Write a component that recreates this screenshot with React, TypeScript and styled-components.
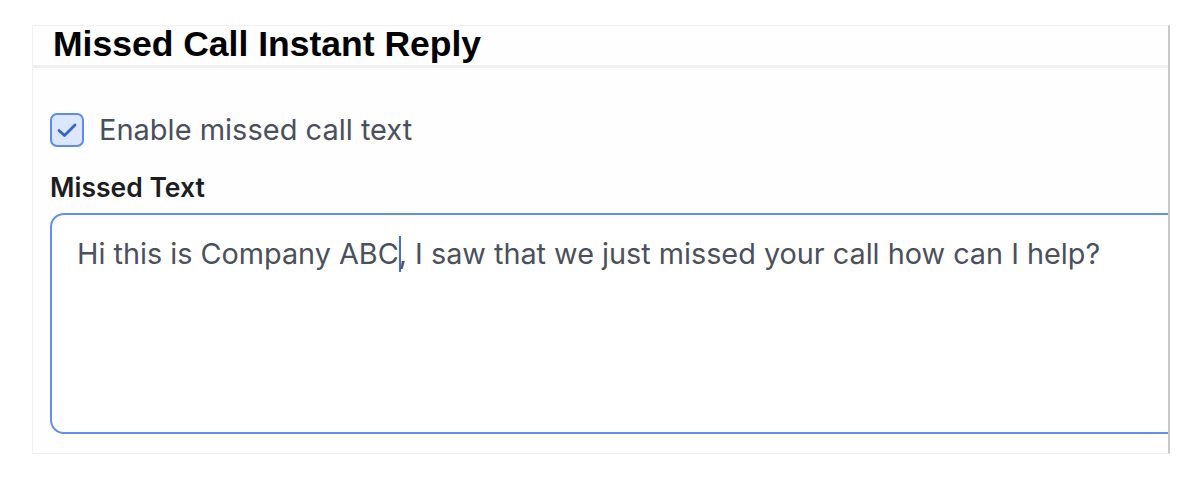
import React from "react";
import styled, { createGlobalStyle } from "styled-components";

const Global = createGlobalStyle`
  html, body { margin: 0; padding: 0; background: #ffffff; }
  * { box-sizing: border-box; }
`;

const Page = styled.div`
  padding: 25px 0 0 32px;
  width: 1200px;
  height: 484px;
`;

const Panel = styled.section`
  width: 1138px;
  height: 429px;
  background: #fefefe;
  border: 1px solid #f1f1f1;
  border-right: 2px solid #c9c9c9;
  overflow: hidden;
  display: flex;
  flex-direction: column;
`;

const Header = styled.header`
  height: 42px;
  padding-left: 20px;
  border-bottom: 3px solid #efefef;
  display: flex;
  align-items: center;
`;

const Title = styled.h1`
  margin: -4px 0 0 0;
  font-family: "Liberation Sans", Arial, sans-serif;
  font-weight: 700;
  font-size: 35.5px;
  line-height: 40px;
  color: #000;
  white-space: nowrap;
`;

const Body = styled.div`
  padding: 44px 0 0 17px;
  display: flex;
  flex-direction: column;
`;

const CheckRow = styled.label`
  display: flex;
  align-items: center;
  gap: 15px;
  font-family: Inter, "Noto Sans", sans-serif;
  font-size: 29px;
  color: #4a4f5c;
`;

const Box = styled.span`
  width: 34px;
  height: 34px;
  border: 2px solid #5b8bec;
  border-radius: 7px;
  background: #dce7fc;
  display: flex;
  align-items: center;
  justify-content: center;
`;

const FieldLabel = styled.div`
  margin-top: 25px;
  font-family: Inter, "Noto Sans", sans-serif;
  font-weight: 600;
  font-size: 26.5px;
  color: #1c1d22;
  line-height: 30px;
`;

const Area = styled.div`
  margin-top: 11px;
  width: 1200px;
  height: 221px;
  border: 2px solid #6390ec;
  border-radius: 14px;
  padding: 20px 0 0 25px;
  font-family: Inter, "Noto Sans", sans-serif;
  font-size: 28.8px;
  line-height: 38px;
  color: #4b505c;
  background: #fff;
`;

const Caret = styled.span`
  display: inline-block;
  width: 2px;
  height: 36px;
  margin-right: -2px;
  background: #3b6fe0;
  vertical-align: -8px;
`;

export default function App() {
  return (
    <>
      <Global />
      <Page>
        <Panel>
          <Header>
            <Title>Missed Call Instant Reply</Title>
          </Header>
          <Body>
            <CheckRow>
              <Box>
                <svg width="22" height="16" viewBox="0 0 22 16" fill="none">
                  <path d="M3 8.5 L8.5 13.5 L19 3" stroke="#2f63d6" strokeWidth="2.8" strokeLinecap="round" strokeLinejoin="round" />
                </svg>
              </Box>
              Enable missed call text
            </CheckRow>
            <FieldLabel>Missed Text</FieldLabel>
            <Area>
              Hi this is Company ABC<Caret />, I saw that we just missed your call how can I help?
            </Area>
          </Body>
        </Panel>
      </Page>
    </>
  );
}
